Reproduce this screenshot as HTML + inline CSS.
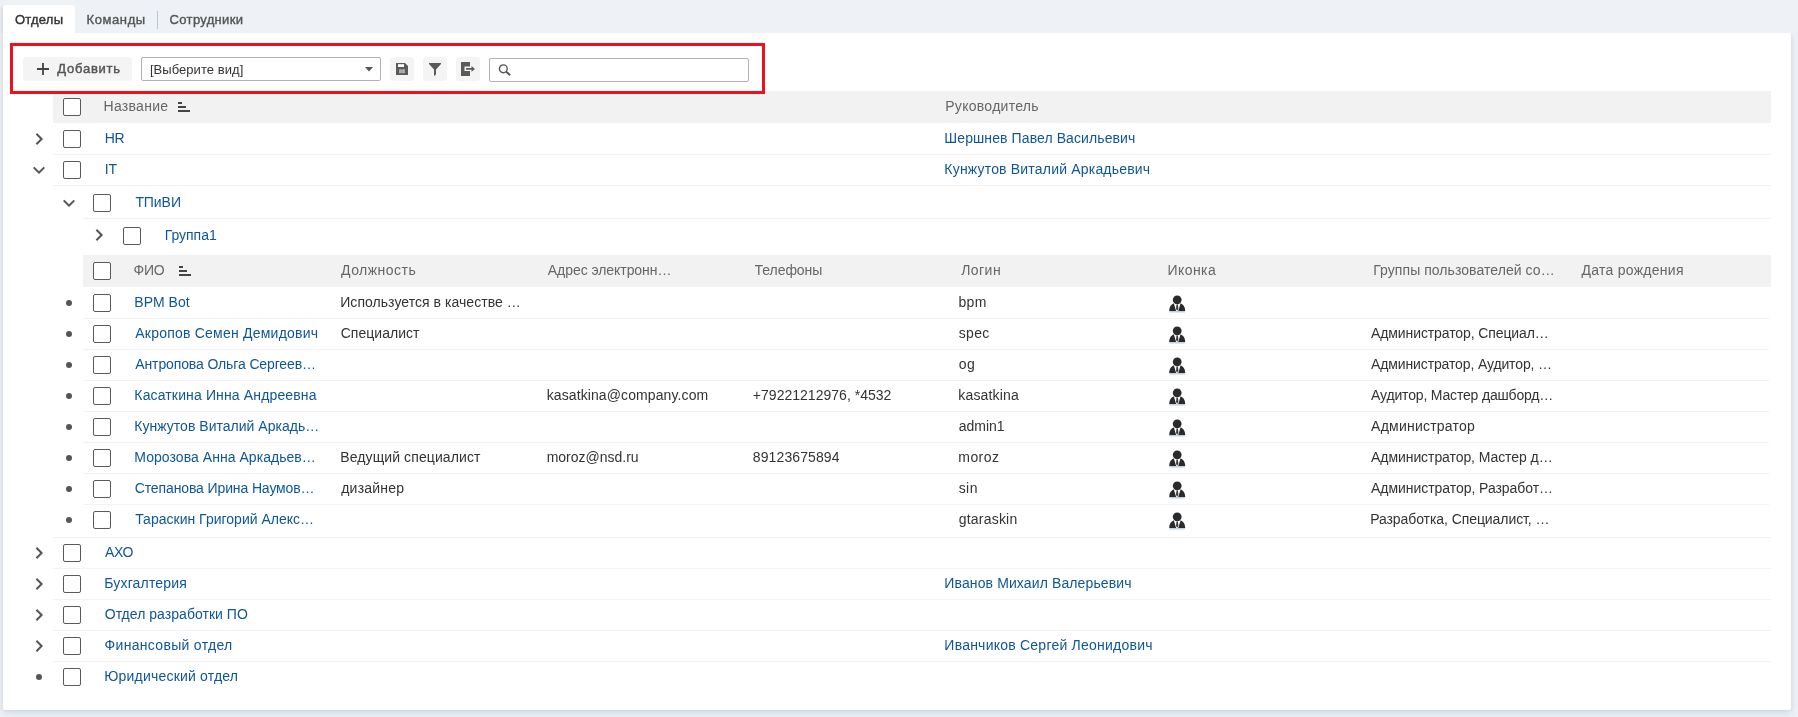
<!DOCTYPE html>
<html lang="ru"><head><meta charset="utf-8"><title>Отделы</title>
<style>
*{box-sizing:border-box}
html,body{margin:0;padding:0}
body{width:1798px;height:717px;overflow:hidden;position:relative;background:#eef1f6;font-family:"Liberation Sans",sans-serif;font-size:14px;color:#333}
.abs,.t,.cb,.sep,.hdr,.dot,.chev,.ibtn,.usr,.sort{position:absolute}
.panel{left:3px;top:33px;width:1788px;height:677px;background:#fff;border-radius:0 2px 2px 2px;box-shadow:0 3px 7px rgba(125,135,160,.22),0 0 4px rgba(125,135,160,.12);clip-path:inset(0 -12px -12px -12px)}
.tabact{left:3px;top:5px;width:72px;height:29px;background:#fff;border-radius:3px 3px 0 0;box-shadow:-3px 1px 3px -1px rgba(125,135,160,.22);clip-path:inset(-2px 0 0 -6px)}
.t.tab{height:28px;line-height:28px;font-size:13px;color:#555;-webkit-text-stroke:.4px currentColor}
.t.add{height:24px;line-height:23px;font-size:13px;color:#555;-webkit-text-stroke:.45px currentColor}
.t.selt{height:24px;line-height:25px;font-size:13px;color:#333}
.tabsep{left:157px;top:11px;width:1px;height:18px;background:#b6c3d1}
.red{left:10px;top:43px;width:755px;height:51px;border:3px solid #ec111a;z-index:5}
.btn{left:23px;top:57px;width:109px;height:24px;background:#f4f4f4;border-radius:3px}
.sel{left:141px;top:57px;width:240px;height:24px;border:1px solid #b3b3b3;border-radius:2px;background:#fff}
.ibtn{top:57px;width:24px;height:24px;background:#f4f4f4;border-radius:3px}
.srch{left:489px;top:58px;width:260px;height:24px;border:1px solid #b3b3b3;border-radius:2px;background:#fff}
.hdr{background:#f2f2f2}
.sep{height:1px;background:#f3f3f3}
.t{white-space:nowrap;font-size:14px;height:31px;line-height:31px;overflow:hidden}
.l{color:#0e5697}
.h{color:#666}
.cb{width:18px;height:18px;border:1px solid #5a5a5a;border-radius:2px;background:#fff}
.dot{width:6.4px;height:6.4px;border-radius:50%;background:#555}
</style></head><body>

<div id="root" style="position:absolute;left:0;top:0;width:1798px;height:717px;will-change:transform">
<div class="abs panel"></div>
<div class="abs tabact"></div>
<div id="t0" class="t tab" style="left:14.92px;top:6px;letter-spacing:0.235px;color:#333;">Отделы</div>
<div id="t1" class="t tab" style="left:86.52px;top:6px;letter-spacing:0.593px;">Команды</div>
<div class="abs tabsep"></div>
<div id="t2" class="t tab" style="left:169.6px;top:6px;letter-spacing:0.332px;">Сотрудники</div>
<div class="abs btn"></div>
<svg class="abs" style="left:37px;top:63px" width="12" height="12" viewBox="0 0 12 12"><path d="M6 0v12M0 6h12" stroke="#444" stroke-width="1.8" fill="none"/></svg>
<div id="t3" class="t add" style="left:57.36px;top:57px;letter-spacing:0.744px;">Добавить</div>
<div class="abs sel"></div>
<div id="t4" class="t selt" style="left:149.88px;top:57px;letter-spacing:0.056px;">[Выберите вид]</div>
<svg class="abs" style="left:365px;top:67px" width="8" height="5" viewBox="0 0 8 5"><path d="M0 0h8L4 4.6z" fill="#555"/></svg>
<div class="ibtn" style="left:390px"></div>
<svg class="abs" style="left:396px;top:63px" width="12" height="12" viewBox="0 0 12 12"><path d="M0 0h9l3 3v9H0z" fill="#5a5a5a"/><rect x="2" y="1.2" width="6" height="2.8" fill="#fff"/><rect x="3" y="6.2" width="6" height="4" fill="#a9a9a9"/></svg>
<div class="ibtn" style="left:423px"></div>
<svg class="abs" style="left:429px;top:63px" width="12" height="13" viewBox="0 0 12 13"><path d="M0 0h12v1L7 6.5v5L5 13V6.5L0 1z" fill="#5a5a5a"/></svg>
<div class="ibtn" style="left:456px"></div>
<svg class="abs" style="left:461px;top:62px" width="14" height="14" viewBox="0 0 14 14"><path d="M0 0h9v4.5H3.5v4.5H9V14H0z" fill="#5a5a5a"/><path d="M5 6h5.5V4L14 6.9 10.5 9.8V7.8H5z" fill="#5a5a5a"/></svg>
<div class="abs srch"></div>
<svg class="abs" style="left:498px;top:63px" width="14" height="14" viewBox="0 0 14 14"><circle cx="5.3" cy="5.8" r="3.9" stroke="#555" stroke-width="1.4" fill="none"/><path d="M8.2 8.7l4 3.6" stroke="#555" stroke-width="1.9" fill="none"/></svg>
<div class="hdr" style="left:53px;top:91px;width:1718px;height:32px"></div>
<div class="cb" style="left:63px;top:98px"></div>
<div id="t5" class="t h" style="left:103.56px;top:91px;letter-spacing:0.278px;">Название</div>
<svg class="abs" style="left:178px;top:102px" width="12" height="10" viewBox="0 0 12 10"><path d="M0 0h4v2H0zM0 4h8v2H0zM0 8h12v2H0z" fill="#444"/></svg>
<div id="t6" class="t h" style="left:945.26px;top:91px;letter-spacing:0.286px;">Руководитель</div>
<svg class="abs" style="left:35px;top:132px" width="9" height="14" viewBox="0 0 9 14"><path d="M1.4 1.8L6.6 7 1.4 12.2" stroke="#555" stroke-width="2" fill="none"/></svg>
<div class="cb" style="left:63px;top:130px"></div>
<div id="t7" class="t l" style="left:104.65px;top:123px;letter-spacing:-0.300px;">HR</div>
<div id="t8" class="t l" style="left:944.35px;top:123px;letter-spacing:0.097px;">Шершнев Павел Васильевич</div>
<div class="sep" style="left:53px;top:154px;width:1718px"></div>
<svg class="abs" style="left:32px;top:166px" width="14" height="9" viewBox="0 0 14 9"><path d="M1.7 1.4L7 6.6 12.3 1.4" stroke="#555" stroke-width="2" fill="none"/></svg>
<div class="cb" style="left:63px;top:161px"></div>
<div id="t9" class="t l" style="left:104.8px;top:154px;letter-spacing:-0.300px;">IT</div>
<div id="t10" class="t l" style="left:944.35px;top:154px;letter-spacing:0.190px;">Кунжутов Виталий Аркадьевич</div>
<div class="sep" style="left:53px;top:185px;width:1718px"></div>
<svg class="abs" style="left:62px;top:199px" width="14" height="9" viewBox="0 0 14 9"><path d="M1.7 1.4L7 6.6 12.3 1.4" stroke="#555" stroke-width="2" fill="none"/></svg>
<div class="cb" style="left:93px;top:194px"></div>
<div id="t11" class="t l" style="left:135.39px;top:187px;letter-spacing:-0.067px;">ТПиВИ</div>
<div class="sep" style="left:83px;top:218px;width:1688px"></div>
<svg class="abs" style="left:95px;top:228px" width="9" height="14" viewBox="0 0 9 14"><path d="M1.4 1.8L6.6 7 1.4 12.2" stroke="#555" stroke-width="2" fill="none"/></svg>
<div class="cb" style="left:123px;top:227px"></div>
<div id="t12" class="t l" style="left:164.75px;top:220px;letter-spacing:-0.037px;">Группа1</div>
<div class="hdr" style="left:83px;top:255px;width:1688px;height:32px"></div>
<div class="cb" style="left:93px;top:262px"></div>
<div id="t13" class="t h" style="left:133.56px;top:255px;letter-spacing:-0.293px;">ФИО</div>
<svg class="abs" style="left:179px;top:266px" width="12" height="10" viewBox="0 0 12 10"><path d="M0 0h4v2H0zM0 4h8v2H0zM0 8h12v2H0z" fill="#444"/></svg>
<div id="t14" class="t h" style="left:341.0px;top:255px;letter-spacing:0.489px;">Должность</div>
<div id="t15" class="t h" style="left:547.79px;top:255px;letter-spacing:-0.054px;">Адрес электронн…</div>
<div id="t16" class="t h" style="left:754.61px;top:255px;letter-spacing:-0.059px;">Телефоны</div>
<div id="t17" class="t h" style="left:961.19px;top:255px;letter-spacing:0.450px;">Логин</div>
<div id="t18" class="t h" style="left:1167.46px;top:255px;letter-spacing:0.450px;">Иконка</div>
<div id="t19" class="t h" style="left:1373.26px;top:255px;letter-spacing:0.058px;">Группы пользователей со…</div>
<div id="t20" class="t h" style="left:1581.4px;top:255px;letter-spacing:0.277px;">Дата рождения</div>
<div class="dot" style="left:65.8px;top:299.8px"></div>
<div class="cb" style="left:93px;top:294px"></div>
<div id="t21" class="t l" style="left:134.35px;top:287px;letter-spacing:0.001px;">BPM Bot</div>
<div id="t22" class="t " style="left:340.25px;top:287px;letter-spacing:0.044px;">Используется в качестве …</div>
<div id="t23" class="t " style="left:958.38px;top:287px;letter-spacing:0.450px;">bpm</div>
<svg class="abs" style="left:1169px;top:295px" width="17" height="19" viewBox="0 0 17 19"><rect x="0.3" y="15.6" width="15.8" height="1.8" rx=".6" fill="#c6d0da"/><circle cx="8.2" cy="4.8" r="4.4" fill="#2a2a2c"/><path d="M0.2 16.1c0-4.2 1.8-6.6 4.6-7.8l2.3 7.8zM16.2 16.1c0-4.2-1.8-6.6-4.6-7.8l-2.3 7.8z" fill="#2a2a2c"/><path d="M7.5 9.6h1.4l.5 4.4-1.2 1.6L7 14z" fill="#3a3a3c"/></svg>
<div class="sep" style="left:83px;top:318px;width:1686px"></div>
<div class="dot" style="left:65.8px;top:330.8px"></div>
<div class="cb" style="left:93px;top:325px"></div>
<div id="t24" class="t l" style="left:135.28px;top:318px;letter-spacing:0.223px;">Акропов Семен Демидович</div>
<div id="t25" class="t " style="left:340.65px;top:318px;letter-spacing:0.042px;">Специалист</div>
<div id="t26" class="t " style="left:958.64px;top:318px;letter-spacing:0.358px;">spec</div>
<div id="t27" class="t " style="left:1371.07px;top:318px;letter-spacing:-0.108px;">Администратор, Специал…</div>
<svg class="abs" style="left:1169px;top:326px" width="17" height="19" viewBox="0 0 17 19"><rect x="0.3" y="15.6" width="15.8" height="1.8" rx=".6" fill="#c6d0da"/><circle cx="8.2" cy="4.8" r="4.4" fill="#2a2a2c"/><path d="M0.2 16.1c0-4.2 1.8-6.6 4.6-7.8l2.3 7.8zM16.2 16.1c0-4.2-1.8-6.6-4.6-7.8l-2.3 7.8z" fill="#2a2a2c"/><path d="M7.5 9.6h1.4l.5 4.4-1.2 1.6L7 14z" fill="#3a3a3c"/></svg>
<div class="sep" style="left:83px;top:349px;width:1686px"></div>
<div class="dot" style="left:65.8px;top:361.8px"></div>
<div class="cb" style="left:93px;top:356px"></div>
<div id="t28" class="t l" style="left:135.28px;top:349px;letter-spacing:-0.121px;">Антропова Ольга Сергеев…</div>
<div id="t29" class="t " style="left:958.66px;top:349px;letter-spacing:0.450px;">og</div>
<div id="t30" class="t " style="left:1371.07px;top:349px;letter-spacing:-0.128px;">Администратор, Аудитор, …</div>
<svg class="abs" style="left:1169px;top:357px" width="17" height="19" viewBox="0 0 17 19"><rect x="0.3" y="15.6" width="15.8" height="1.8" rx=".6" fill="#c6d0da"/><circle cx="8.2" cy="4.8" r="4.4" fill="#2a2a2c"/><path d="M0.2 16.1c0-4.2 1.8-6.6 4.6-7.8l2.3 7.8zM16.2 16.1c0-4.2-1.8-6.6-4.6-7.8l-2.3 7.8z" fill="#2a2a2c"/><path d="M7.5 9.6h1.4l.5 4.4-1.2 1.6L7 14z" fill="#3a3a3c"/></svg>
<div class="sep" style="left:83px;top:380px;width:1686px"></div>
<div class="dot" style="left:65.8px;top:392.8px"></div>
<div class="cb" style="left:93px;top:387px"></div>
<div id="t31" class="t l" style="left:134.35px;top:380px;letter-spacing:0.139px;">Касаткина Инна Андреевна</div>
<div id="t32" class="t " style="left:546.67px;top:380px;letter-spacing:0.106px;">kasatkina@company.com</div>
<div id="t33" class="t " style="left:752.82px;top:380px;letter-spacing:0.022px;">+79221212976, *4532</div>
<div id="t34" class="t " style="left:958.37px;top:380px;letter-spacing:0.147px;">kasatkina</div>
<div id="t35" class="t " style="left:1371.07px;top:380px;letter-spacing:-0.174px;">Аудитор, Мастер дашборд…</div>
<svg class="abs" style="left:1169px;top:388px" width="17" height="19" viewBox="0 0 17 19"><rect x="0.3" y="15.6" width="15.8" height="1.8" rx=".6" fill="#c6d0da"/><circle cx="8.2" cy="4.8" r="4.4" fill="#2a2a2c"/><path d="M0.2 16.1c0-4.2 1.8-6.6 4.6-7.8l2.3 7.8zM16.2 16.1c0-4.2-1.8-6.6-4.6-7.8l-2.3 7.8z" fill="#2a2a2c"/><path d="M7.5 9.6h1.4l.5 4.4-1.2 1.6L7 14z" fill="#3a3a3c"/></svg>
<div class="sep" style="left:83px;top:411px;width:1686px"></div>
<div class="dot" style="left:65.8px;top:423.8px"></div>
<div class="cb" style="left:93px;top:418px"></div>
<div id="t36" class="t l" style="left:134.35px;top:411px;letter-spacing:0.019px;">Кунжутов Виталий Аркадь…</div>
<div id="t37" class="t " style="left:958.66px;top:411px;letter-spacing:0.014px;">admin1</div>
<div id="t38" class="t " style="left:1371.07px;top:411px;letter-spacing:0.229px;">Администратор</div>
<svg class="abs" style="left:1169px;top:419px" width="17" height="19" viewBox="0 0 17 19"><rect x="0.3" y="15.6" width="15.8" height="1.8" rx=".6" fill="#c6d0da"/><circle cx="8.2" cy="4.8" r="4.4" fill="#2a2a2c"/><path d="M0.2 16.1c0-4.2 1.8-6.6 4.6-7.8l2.3 7.8zM16.2 16.1c0-4.2-1.8-6.6-4.6-7.8l-2.3 7.8z" fill="#2a2a2c"/><path d="M7.5 9.6h1.4l.5 4.4-1.2 1.6L7 14z" fill="#3a3a3c"/></svg>
<div class="sep" style="left:83px;top:442px;width:1686px"></div>
<div class="dot" style="left:65.8px;top:454.8px"></div>
<div class="cb" style="left:93px;top:449px"></div>
<div id="t39" class="t l" style="left:134.35px;top:442px;letter-spacing:0.043px;">Морозова Анна Аркадьев…</div>
<div id="t40" class="t " style="left:340.25px;top:442px;letter-spacing:0.103px;">Ведущий специалист</div>
<div id="t41" class="t " style="left:546.64px;top:442px;letter-spacing:-0.002px;">moroz@nsd.ru</div>
<div id="t42" class="t " style="left:752.84px;top:442px;letter-spacing:0.103px;">89123675894</div>
<div id="t43" class="t " style="left:958.34px;top:442px;letter-spacing:0.413px;">moroz</div>
<div id="t44" class="t " style="left:1371.07px;top:442px;letter-spacing:-0.074px;">Администратор, Мастер д…</div>
<svg class="abs" style="left:1169px;top:450px" width="17" height="19" viewBox="0 0 17 19"><rect x="0.3" y="15.6" width="15.8" height="1.8" rx=".6" fill="#c6d0da"/><circle cx="8.2" cy="4.8" r="4.4" fill="#2a2a2c"/><path d="M0.2 16.1c0-4.2 1.8-6.6 4.6-7.8l2.3 7.8zM16.2 16.1c0-4.2-1.8-6.6-4.6-7.8l-2.3 7.8z" fill="#2a2a2c"/><path d="M7.5 9.6h1.4l.5 4.4-1.2 1.6L7 14z" fill="#3a3a3c"/></svg>
<div class="sep" style="left:83px;top:473px;width:1686px"></div>
<div class="dot" style="left:65.8px;top:485.8px"></div>
<div class="cb" style="left:93px;top:480px"></div>
<div id="t45" class="t l" style="left:134.74px;top:473px;letter-spacing:-0.120px;">Степанова Ирина Наумов…</div>
<div id="t46" class="t " style="left:341.26px;top:473px;letter-spacing:0.196px;">дизайнер</div>
<div id="t47" class="t " style="left:958.64px;top:473px;letter-spacing:0.450px;">sin</div>
<div id="t48" class="t " style="left:1371.07px;top:473px;letter-spacing:-0.052px;">Администратор, Разработ…</div>
<svg class="abs" style="left:1169px;top:481px" width="17" height="19" viewBox="0 0 17 19"><rect x="0.3" y="15.6" width="15.8" height="1.8" rx=".6" fill="#c6d0da"/><circle cx="8.2" cy="4.8" r="4.4" fill="#2a2a2c"/><path d="M0.2 16.1c0-4.2 1.8-6.6 4.6-7.8l2.3 7.8zM16.2 16.1c0-4.2-1.8-6.6-4.6-7.8l-2.3 7.8z" fill="#2a2a2c"/><path d="M7.5 9.6h1.4l.5 4.4-1.2 1.6L7 14z" fill="#3a3a3c"/></svg>
<div class="sep" style="left:83px;top:504px;width:1686px"></div>
<div class="dot" style="left:65.8px;top:516.8px"></div>
<div class="cb" style="left:93px;top:511px"></div>
<div id="t49" class="t l" style="left:135.19px;top:504px;letter-spacing:0.007px;">Тараскин Григорий Алекс…</div>
<div id="t50" class="t " style="left:958.66px;top:504px;letter-spacing:0.219px;">gtaraskin</div>
<div id="t51" class="t " style="left:1370.15px;top:504px;letter-spacing:-0.074px;">Разработка, Специалист, …</div>
<svg class="abs" style="left:1169px;top:512px" width="17" height="19" viewBox="0 0 17 19"><rect x="0.3" y="15.6" width="15.8" height="1.8" rx=".6" fill="#c6d0da"/><circle cx="8.2" cy="4.8" r="4.4" fill="#2a2a2c"/><path d="M0.2 16.1c0-4.2 1.8-6.6 4.6-7.8l2.3 7.8zM16.2 16.1c0-4.2-1.8-6.6-4.6-7.8l-2.3 7.8z" fill="#2a2a2c"/><path d="M7.5 9.6h1.4l.5 4.4-1.2 1.6L7 14z" fill="#3a3a3c"/></svg>
<div class="sep" style="left:53px;top:537px;width:1718px"></div>
<svg class="abs" style="left:35px;top:546px" width="9" height="14" viewBox="0 0 9 14"><path d="M1.4 1.8L6.6 7 1.4 12.2" stroke="#555" stroke-width="2" fill="none"/></svg>
<div class="cb" style="left:63px;top:544px"></div>
<div id="t52" class="t l" style="left:104.98px;top:537px;letter-spacing:-0.300px;">АХО</div>
<div class="sep" style="left:53px;top:568px;width:1718px"></div>
<svg class="abs" style="left:35px;top:577px" width="9" height="14" viewBox="0 0 9 14"><path d="M1.4 1.8L6.6 7 1.4 12.2" stroke="#555" stroke-width="2" fill="none"/></svg>
<div class="cb" style="left:63px;top:575px"></div>
<div id="t53" class="t l" style="left:104.25px;top:568px;letter-spacing:0.168px;">Бухгалтерия</div>
<div id="t54" class="t l" style="left:944.35px;top:568px;letter-spacing:0.116px;">Иванов Михаил Валерьевич</div>
<div class="sep" style="left:53px;top:599px;width:1718px"></div>
<svg class="abs" style="left:35px;top:608px" width="9" height="14" viewBox="0 0 9 14"><path d="M1.4 1.8L6.6 7 1.4 12.2" stroke="#555" stroke-width="2" fill="none"/></svg>
<div class="cb" style="left:63px;top:606px"></div>
<div id="t55" class="t l" style="left:104.71px;top:599px;letter-spacing:0.035px;">Отдел разработки ПО</div>
<div class="sep" style="left:53px;top:630px;width:1718px"></div>
<svg class="abs" style="left:35px;top:639px" width="9" height="14" viewBox="0 0 9 14"><path d="M1.4 1.8L6.6 7 1.4 12.2" stroke="#555" stroke-width="2" fill="none"/></svg>
<div class="cb" style="left:63px;top:637px"></div>
<div id="t56" class="t l" style="left:104.56px;top:630px;letter-spacing:0.312px;">Финансовый отдел</div>
<div id="t57" class="t l" style="left:944.35px;top:630px;letter-spacing:0.230px;">Иванчиков Сергей Леонидович</div>
<div class="sep" style="left:53px;top:661px;width:1718px"></div>
<div class="dot" style="left:35.8px;top:673.8px"></div>
<div class="cb" style="left:63px;top:668px"></div>
<div id="t58" class="t l" style="left:104.25px;top:661px;letter-spacing:0.196px;">Юридический отдел</div>
<div class="abs red"></div>
</div>
</body></html>
